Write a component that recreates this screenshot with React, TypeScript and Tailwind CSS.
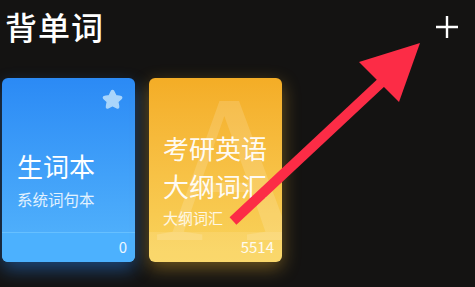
import React from 'react';

const font = { fontFamily: '"Noto Sans CJK SC", "Noto Sans", sans-serif' };

function StarIcon() {
  return (
    <svg width="23" height="23" viewBox="0 0 24 24" className="text-[#a9d5fb]">
      <path
        d="M12 2.6c.5 0 .9.3 1.1.7l2.3 4.7 5.1.8c1 .1 1.4 1.3.7 2l-3.7 3.6.9 5.1c.2 1-.9 1.7-1.7 1.2L12 18.3l-4.6 2.4c-.9.5-1.9-.3-1.7-1.2l.9-5.1-3.7-3.6c-.7-.7-.3-1.9.7-2l5.1-.8 2.3-4.7c.2-.4.6-.7 1-.7z"
        fill="currentColor"
        stroke="currentColor"
        strokeWidth="1.6"
        strokeLinejoin="round"
      />
    </svg>
  );
}

export default function App() {
  return (
    <div className="relative w-[475px] h-[287px] overflow-hidden bg-[#141312] text-white" style={font}>
      <div className="flex items-center justify-between pl-[5px] pr-[16px] pt-[6px]">
        <h1 className="text-[32px] leading-[40px] font-medium tracking-[1px]">背单词</h1>
        <svg width="24" height="24" viewBox="0 0 24 24" className="mt-[2px]">
          <path d="M12 1v22M1 12h22" stroke="white" strokeWidth="2.4" />
        </svg>
      </div>

      <div className="flex gap-[14px] pl-[2px] pt-[32px]">
        <div className="relative w-[133px] h-[184px] rounded-[6px] overflow-hidden bg-gradient-to-b from-[#2b8af5] to-[#55b5fc] shadow-[0_8px_18px_rgba(40,130,240,0.45)] flex flex-col">
          <div className="flex justify-end pt-[10px] pr-[11px]">
            <StarIcon />
          </div>
          <div className="pl-[15px] pt-[39px] flex-1">
            <div className="text-[26px] leading-[32px]">生词本</div>
            <div className="text-[15.5px] leading-[20px] mt-[7px] text-white/85">系统词句本</div>
          </div>
          <div className="h-[30px] bg-[#4cb1fe] border-t border-[#66c0ff] flex items-center justify-end pr-[8px] text-[15px] text-white/90">
            0
          </div>
        </div>

        <div className="relative w-[133px] h-[184px] rounded-[6px] overflow-hidden bg-gradient-to-b from-[#f4ad26] to-[#f9d45c] shadow-[0_6px_18px_rgba(245,185,50,0.4)] flex flex-col">
          <div
            aria-hidden="true"
            className="absolute left-[6px] top-[-14px] text-[210px] leading-none text-white/15 select-none"
            style={{ fontFamily: '"Liberation Serif", serif' }}
          >
            A
          </div>
          <div className="relative pl-[14px] pt-[51px] flex-1">
            <div className="text-[26px] leading-[38px] text-white/95">考研英语</div>
            <div className="text-[26px] leading-[38px] text-white/95">大纲词汇</div>
            <div className="text-[15px] leading-[20px] mt-[3px] text-white/85">大纲词汇</div>
          </div>
          <div className="relative h-[30px] bg-white/10 flex items-center justify-end pr-[8px] text-[15px] text-white/90">
            5514
          </div>
        </div>
      </div>

      <svg className="absolute left-0 top-0 pointer-events-none" width="475" height="287" viewBox="0 0 475 287">
        <line x1="233" y1="221" x2="385" y2="79" stroke="#fc2c46" strokeWidth="10" />
        <polygon points="420,43 359,62 399,102" fill="#fc2c46" />
      </svg>
    </div>
  );
}
